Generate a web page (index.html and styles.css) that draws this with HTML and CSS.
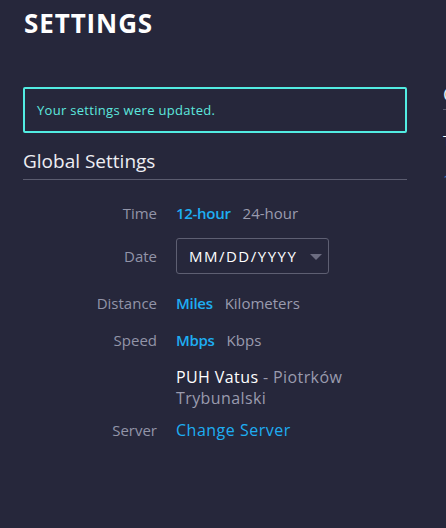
FILE: index.html
```html
<!DOCTYPE html>
<html lang="en">
<head>
<meta charset="utf-8">
<title>Settings</title>
<link rel="stylesheet" href="styles.css">
</head>
<body>
<div class="page">
  <h1 class="title">SETTINGS</h1>
  <div class="columns">
    <main class="main-col">
      <div class="alert">Your settings were updated.</div>
      <h2 class="section-title">Global Settings</h2>
      <div class="rows">
        <div class="row">
          <div class="label">Time</div>
          <div class="value">
            <span class="opt active">12-hour</span>
            <span class="opt">24-hour</span>
          </div>
        </div>
        <div class="row row-date">
          <div class="label">Date</div>
          <div class="value">
            <div class="select">
              <span class="select-text">MM/DD/YYYY</span>
              <span class="caret"></span>
            </div>
          </div>
        </div>
        <div class="row">
          <div class="label">Distance</div>
          <div class="value">
            <span class="opt active bold">Miles</span>
            <span class="opt">Kilometers</span>
          </div>
        </div>
        <div class="row">
          <div class="label">Speed</div>
          <div class="value">
            <span class="opt active bold">Mbps</span>
            <span class="opt">Kbps</span>
          </div>
        </div>
        <div class="row row-server">
          <div class="label">Server</div>
          <div class="value">
            <div class="server-name"><span class="sponsor">PUH Vatus</span> - Piotrków Trybunalski</div>
            <a class="link">Change Server</a>
          </div>
        </div>
      </div>
    </main>
    <aside class="side-col">
      <h2 class="side-title">Connection</h2>
      <div class="side-sub">Test</div>
      <p class="side-text">1 Vi Mbps</p>
    </aside>
  </div>
</div>
</body>
</html>
```

FILE: styles.css
```css
html, body {
  margin: 0;
  padding: 0;
  background: #26273b;
  overflow: hidden;
}
body {
  font-family: "Open Sans", "Liberation Sans", sans-serif;
  color: #f0f0f5;
  width: 446px;
  height: 528px;
}
.page {
  padding-left: 23px;
}
.title {
  margin: 7px 0 0 1px;
  font-size: 26px;
  line-height: 32px;
  font-weight: 700;
  letter-spacing: 0.9px;
  color: #ffffff;
}
.columns {
  display: flex;
  gap: 36px;
  margin-top: 48px;
  width: 700px;
}
.main-col {
  width: 384px;
  flex: none;
}
.alert {
  border: 2px solid #52ece2;
  border-radius: 2px;
  padding: 12px 12px;
  font-size: 13px;
  line-height: 18px;
  letter-spacing: 0.3px;
  color: #5de8df;
}
.section-title {
  margin: 16px 0 0 0;
  font-size: 19px;
  line-height: 24px;
  font-weight: 400;
  padding-bottom: 6px;
  border-bottom: 1px solid #5b5c6f;
  color: #eeeef3;
}
.rows {
  display: flex;
  flex-direction: column;
  gap: 17px;
  margin-top: 23px;
}
.row {
  display: grid;
  grid-template-columns: 134px 1fr;
  column-gap: 19px;
  align-items: center;
  font-size: 15px;
  line-height: 20px;
}
.row-date {
  margin-top: -2px;
  margin-bottom: 2px;
}
.row-server {
  align-items: end;
}
.label {
  text-align: right;
  color: #9294a8;
}
.value {
  display: flex;
  gap: 12px;
  align-items: center;
}
.opt {
  color: #9a9bae;
}
.opt.active {
  color: #1eaef2;
  font-weight: 600;
  letter-spacing: -0.3px;
}
.select {
  width: 139px;
  height: 34px;
  border: 1px solid #5e5f72;
  border-radius: 3px;
  display: flex;
  align-items: center;
  padding-left: 12px;
  box-sizing: content-box;
  position: relative;
}
.select-text {
  font-size: 15px;
  letter-spacing: 1.5px;
  color: #ffffff;
}
.caret {
  position: absolute;
  right: 6px;
  top: 15px;
  width: 0;
  height: 0;
  border-left: 6px solid transparent;
  border-right: 6px solid transparent;
  border-top: 6px solid #6c6d81;
}
.row-server .value {
  flex-direction: column;
  align-items: flex-start;
  gap: 11px;
}
.server-name {
  color: #9a9bae;
  font-size: 16px;
  line-height: 21px;
  letter-spacing: 0.4px;
  width: 190px;
}
.sponsor {
  color: #ffffff;
}
.link {
  color: #1eaef2;
  font-size: 16px;
  line-height: 20px;
  letter-spacing: 0.5px;
}
.side-col {
  width: 220px;
  flex: none;
}
.side-title {
  margin: -5px 0 0 0;
  font-size: 18px;
  line-height: 24px;
  font-weight: 400;
  padding-bottom: 3px;
  border-bottom: 1px solid #5b5c6f;
  color: #eeeef3;
}
.side-sub {
  margin-top: 20px;
  font-size: 15px;
  color: #ffffff;
}
.side-text {
  margin: 18px 0 0 0;
  font-size: 15px;
  line-height: 22px;
  color: #3a78c0;
}
```
